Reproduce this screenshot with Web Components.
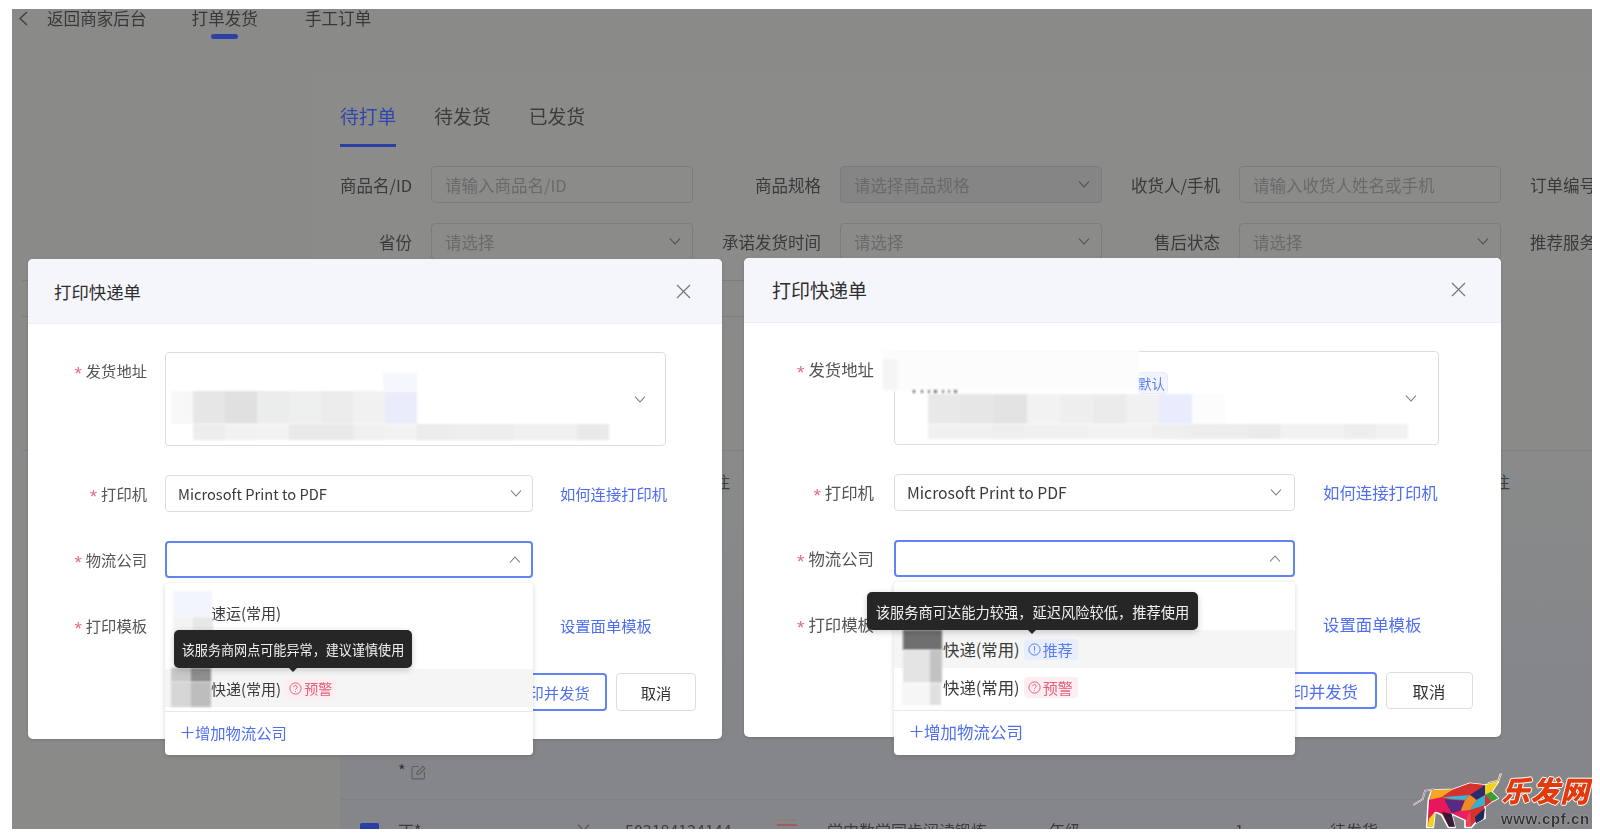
<!DOCTYPE html>
<html lang="zh">
<head>
<meta charset="utf-8">
<title>打印快递单</title>
<style>
html,body{margin:0;padding:0;background:#fff;width:1600px;height:838px;overflow:hidden;font-family:"Noto Sans CJK SC","Noto Sans",sans-serif}
</style>
</head>
<body>
<app-screen>
  <page-nav></page-nav>
  <order-filters></order-filters>
  <order-table></order-table>

  <print-dialog style="left:16px;top:250px;width:694px;--fs:15.3px;--title:17.4px;--label:119px;--gap:18px;--addr:501px;--sel:368px;--hdr:65px;--hl:26px;--hr:31px;--pad-r:26px;--btn:111px;--cancel:80px;--btn-h:38px;--link-gap:27px;--chev:11px;--addr-pr:19px">
    <mosaic-patch slot="address" style="left:5px;top:38px" w="32" cells="#f8f8f8:22 #e6e6e6 #e0e0e0 #ebecec #eeefef #ececec #f1f1f1 #e9ecfb" h="33"></mosaic-patch>
    <mosaic-patch slot="address" style="left:27px;top:71px" w="32" cells="#ededed #f1f1f1 #f2f2f2 #e9e9e9 #e9e9e9 #f0f0f0 #f2f2f2 #ececec #eeeeee #ededed #f0f0f0 #f0f0f0 #e9e9e9" h="16"></mosaic-patch>
    <mosaic-patch slot="address" style="left:217px;top:20px" w="34" cells="#f5f7fe" h="18"></mosaic-patch>
    <drop-list slot="drop" style="--itemfs:15px;--bfs:14px;--footfs:15.3px;--pl:46px;--foot:44px;--top:10px;--after:4px">
      <drop-item>速运(常用)</drop-item>
      <drop-item></drop-item>
      <drop-item hover>快递(常用)<status-badge kind="warn">预警</status-badge></drop-item>
      <mosaic-patch style="left:8px;top:8px" w="39" cells="#f3f5fd" h="26"></mosaic-patch>
      <mosaic-patch style="left:8px;top:34px" w="20" cells="#f2f3f2 #e6e8e6" h="16"></mosaic-patch>
      <mosaic-patch style="left:6px;top:85px" w="20" cells="#c8c8c8 #8e8e8e" h="14"></mosaic-patch>
      <mosaic-patch style="left:6px;top:99px" w="20" cells="#d5d5d5 #bdbdbd" h="25"></mosaic-patch>
      <dark-tip style="left:9px;top:47px;width:238px;--tfs:13.1px;--arrow:119px">该服务商网点可能异常，建议谨慎使用</dark-tip>
    </drop-list>
  </print-dialog>

  <print-dialog style="left:732px;top:248.5px;width:756.5px;--fs:16.4px;--title:19px;--label:130px;--gap:20px;--addr:545px;--sel:401px;--hdr:65.5px;--hl:28px;--hr:35px;--pad-r:28px;--btn:119px;--cancel:87px;--btn-h:37px;--link-gap:28px;--chev:13px;--addr-pr:21px">
    <mosaic-patch slot="address" style="left:33px;top:42px" w="33" cells="#e8e8e8 #e6e6e6 #e3e3e3 #f2f2f2 #eeeeee #ebebeb #f1f1f1 #e8ecfc #fcfcfc" h="30"></mosaic-patch>
    <mosaic-patch slot="address" style="left:33px;top:72px" w="32" cells="#f0f0f0 #f0f0f0 #eeeeee #f0f0f0 #f0f0f0 #f2f2f2 #f2f2f2 #efefef #ededed #ededed #ebebeb #f1f1f1 #f1f1f1 #ededed #f1f1f1" h="15"></mosaic-patch>
    <default-tag slot="address" style="left:243px;top:20px">默认</default-tag>
    <mosaic-patch slot="address" style="left:-12px;top:-2px" w="256" cells="#fcfcfc" h="41"></mosaic-patch>
    <mosaic-patch slot="address" style="left:-12px;top:7px" w="15" cells="#f5f5f5" h="30"></mosaic-patch>
    <mosaic-patch slot="address" style="left:18px;top:38px" w="3" cells="#555:2 #fff:6 #666:2 #fff:5 #777:2 #fff:4 #666:3 #fff:5 #777:2 #fff:4 #888:2 #fff:4 #777:3" h="3"></mosaic-patch>
    <drop-list slot="drop" style="--itemfs:16.4px;--bfs:15px;--footfs:16.5px;--pl:49px;--foot:45px;--top:10px;--after:4px">
      <drop-item></drop-item>
      <drop-item hover>快递(常用)<status-badge kind="rec">推荐</status-badge></drop-item>
      <drop-item>快递(常用)<status-badge kind="warn">预警</status-badge></drop-item>
      <mosaic-patch style="left:9px;top:48px" w="39" cells="#6f6f6f" h="20"></mosaic-patch>
      <mosaic-patch style="left:9px;top:68px" w="27" cells="#e4e4e4:27 #c2c2c2:12" h="33"></mosaic-patch>
      <mosaic-patch style="left:8px;top:101px" w="27" cells="#f6f6f6:28 #e0e0e0:11" h="22"></mosaic-patch>
      <dark-tip style="left:-27px;top:10px;width:331px;--tfs:14.25px;--arrow:165px">该服务商可达能力较强，延迟风险较低，推荐使用</dark-tip>
    </drop-list>
  </print-dialog>

  <watermark-logo></watermark-logo>
</app-screen>

<script>
const chevron = (up, size, col) => `<svg width="${size}" height="${Math.round(size*.6)}" viewBox="0 0 12 7" fill="none" stroke="${col || '#767676'}" stroke-width="1.1" style="display:block;flex:none"><path d="${up ? 'M1 6.5 6 1l5 5.5' : 'M1 .5 6 6l5-5.5'}"/></svg>`;

function define(name, html, setup) {
  customElements.define(name, class extends HTMLElement {
    constructor() {
      super();
      this.attachShadow({mode: 'open'});
    }
    connectedCallback() {
      this.shadowRoot.innerHTML = typeof html === 'function' ? html(this) : html;
      if (setup) setup(this);
    }
  });
}

define('app-screen', `<style>
:host{display:flex;flex-direction:column;position:relative;width:1580px;height:820px;margin:9px 0 0 12px;clip-path:inset(-9px 0 0 0);background:#8a8b89;color:#3e3e3e;filter:blur(.4px)}
</style><slot></slot>`);

define('page-nav', `<style>
:host{display:flex;align-items:flex-start;height:63px;flex:none;font-size:16.6px;line-height:18px;color:#383838}
svg{margin:2px 0 0 5px}
.l{display:block}
.back{margin-left:18px;margin-right:45px}
.on{margin-right:47px}
.on::after{content:"";display:block;width:27px;height:5px;border-radius:3px;background:#2c40a8;margin:7px auto 0}
</style>
<svg width="12" height="15" viewBox="0 0 12 15" fill="none" stroke="#3a3a3a" stroke-width="1.2"><path d="M10 1 3 7.5l7 6.5"/></svg>
<span class="l back">返回商家后台</span><span class="l on">打单发货</span><span class="l">手工订单</span>`);

define('order-filters', `<style>
:host{display:block;flex:none;height:207px;margin-left:300px;padding:33px 0 0 28px;box-sizing:border-box;background:#8b8c8a;overflow:hidden}
.tabs{display:flex;gap:38px;margin-bottom:19px}
.t{height:42px;box-sizing:border-box;font-size:18.8px;line-height:22px;color:#3c3c3c}
.t.on{color:#2f47ad;border-bottom:3px solid #2c40a8}
.g{display:grid;grid-template-columns:72px 262px 109px 262px 99px 262px 76px;column-gap:19px;row-gap:20px;font-size:16.5px;align-items:center;white-space:nowrap}
.lb{text-align:right;color:#3a3a3a}
.f{height:37px;box-sizing:border-box;border:1px solid #7b7c7b;border-radius:4px;padding:0 11px 0 13px;display:flex;align-items:center;justify-content:space-between;color:#6a6a6a}
.f.d{background:#848584}
</style>
<div class="tabs"><span class="t on">待打单</span><span class="t">待发货</span><span class="t">已发货</span></div>
<div class="g">
<span class="lb">商品名/ID</span><div class="f">请输入商品名/ID</div>
<span class="lb">商品规格</span><div class="f d">请选择商品规格${chevron(false,12,'#4c4c4c')}</div>
<span class="lb">收货人/手机</span><div class="f">请输入收货人姓名或手机</div>
<span class="lb">订单编号</span>
<span class="lb">省份</span><div class="f">请选择${chevron(false,12,'#4c4c4c')}</div>
<span class="lb">承诺发货时间</span><div class="f">请选择${chevron(false,12,'#4c4c4c')}</div>
<span class="lb">售后状态</span><div class="f">请选择${chevron(false,12,'#4c4c4c')}</div>
<span class="lb">推荐服务</span>
</div>`);

define('order-table', `<style>
:host{display:flex;flex-direction:column;flex:1;min-height:0;font-size:16px;color:#3c3c3c}
.r{margin-left:10px;flex:none;box-sizing:border-box}
.a{height:2px;width:722px;border-bottom:1px solid #7d7d7d}
.b{height:36px;width:722px;border-bottom:1px solid #7d7d7d}
.c{height:134px;border-bottom:1px solid #7f807f}
.lower{flex:1;min-height:0;margin-left:328px;background:linear-gradient(#898a89,#85868a 60%);display:flex;flex-direction:column}
.head{height:60px;flex:none;display:grid;grid-template-columns:374px 16px 764px 16px;align-items:center;font-size:16px;line-height:60px}
.head span{grid-column:2}
.head span+span{grid-column:4}
.memo{height:289px;flex:none;padding:0 0 0 58px;box-sizing:border-box;border-bottom:1px solid #7f8083;display:flex;align-items:flex-start;gap:6px}
.memo b{font-weight:400;line-height:22px;margin-top:248px;font-size:16px;color:#333}
.memo svg{margin-top:254px}
.row{display:grid;grid-template-columns:38px 179px 48px 152px 50px 206px 202px 95px 1fr;padding:19px 0 0 20px;white-space:nowrap;line-height:22px}
.cb{width:19px;height:20px;margin-top:4px;background:#2a3ea6;border-radius:2px}
.ch{display:block;padding-top:5px}
.th{width:20px;height:18px;background:linear-gradient(#8a7f80 0 2px,#85868a 2px 5px,#a05a60 5px 7px,#85868a 7px)}
</style>
<div class="r a"></div><div class="r b"></div><div class="r c"></div>
<div class="lower">
  <div class="head"><span>注</span><span>注</span></div>
  <div class="memo"><b>*</b><svg width="15" height="15" viewBox="0 0 15 15" fill="none" stroke="#5e5f60" stroke-width="1.1"><path d="M8 1.5H2.2A1.2 1.2 0 0 0 1 2.7v10a1.2 1.2 0 0 0 1.2 1.2h10a1.2 1.2 0 0 0 1.2-1.2V7"/><path d="M6 9.5V7.4L12 1.4l2 2-6 6z"/></svg></div>
  <div class="row"><div class="cb"></div><span>丁*</span><span class="ch">${chevron(false,13,'#555')}</span><span>503184124144</span><div class="th"></div><span>学中数学同步阅读锻炼</span><span>一年级</span><span>1</span><span>待发货</span></div>
</div>`);

define('print-dialog', `<style>
:host{position:absolute;display:block;background:#fff;border-radius:5px;font-size:var(--fs);color:#333;box-shadow:0 1px 3px rgba(0,0,0,.15)}
header{height:var(--hdr);box-sizing:border-box;background:#f5f6fb;border-bottom:1px solid #eeeef2;border-radius:5px 5px 0 0;display:flex;align-items:center;justify-content:space-between;padding:0 var(--hr) 0 var(--hl);font-size:var(--title);color:#2e2e2e}
.body{display:flex;flex-direction:column;gap:29px;padding:28px var(--pad-r) 28px 0}
.row{display:flex;align-items:flex-start;gap:var(--gap)}
.lb{width:var(--label);height:37px;flex:none;text-align:right;line-height:37px;color:#555;white-space:nowrap}
.lb i{font-family:"Liberation Sans",sans-serif;font-style:normal;font-size:19px;line-height:0;vertical-align:-3px;color:#ea6a7c;margin-right:4px}
.addr{position:relative;width:var(--addr);height:94px;box-sizing:border-box;border:1px solid #dcdde0;border-radius:4px;display:flex;align-items:center;justify-content:flex-end;padding-right:var(--addr-pr)}
.sel{position:relative;width:var(--sel);height:37px;box-sizing:border-box;border:1px solid #dcdde0;border-radius:4px;display:flex;align-items:center;justify-content:space-between;padding:0 calc(var(--chev) - 1px) 0 12px;flex:none;color:#3a3a3a}
.sel span{font-size:calc(var(--fs) * .96)}
.sel.open{border:2px solid #6283f3;justify-content:flex-end}
.blank{border-color:transparent}
a{color:#4f6ff0;margin-left:calc(var(--link-gap) - var(--gap));line-height:37px;text-decoration:none;white-space:nowrap}
.foot{display:flex;justify-content:flex-end;gap:9px}
.btn{height:var(--btn-h);box-sizing:border-box;border:1px solid #dcdde0;border-radius:4px;width:var(--cancel);display:flex;align-items:center;justify-content:center}
.btn.p{width:var(--btn);border:2px solid #6283f3;color:#4f6ff0}
.drop{position:absolute;left:-2px;right:-2px;top:calc(100% + 7px);z-index:3}
</style>
<header><span>打印快递单</span><svg width="15" height="15" viewBox="0 0 15 15" fill="none" stroke="#777" stroke-width="1.2"><path d="M1 1l13 13M14 1 1 14"/></svg></header>
<div class="body">
  <div class="row"><span class="lb"><i>*</i>发货地址</span><div class="addr"><slot name="address"></slot>${chevron(false,12)}</div></div>
  <div class="row"><span class="lb"><i>*</i>打印机</span><div class="sel"><span>Microsoft Print to PDF</span>${chevron(false,12)}</div><a>如何连接打印机</a></div>
  <div class="row"><span class="lb"><i>*</i>物流公司</span><div class="sel open">${chevron(true,12)}<div class="drop"><slot name="drop"></slot></div></div></div>
  <div class="row"><span class="lb"><i>*</i>打印模板</span><div class="sel blank"></div><a>设置面单模板</a></div>
  <div class="foot"><div class="btn p">打印并发货</div><div class="btn">取消</div></div>
</div>`);

define('drop-list', `<style>
:host{position:relative;display:block;background:#fff;border-radius:4px;box-shadow:0 1px 5px rgba(0,0,0,.16);padding-top:var(--top);font-size:var(--itemfs);color:#3a3a3a}
.foot{margin-top:var(--after);border-top:1.5px solid #e8e8ea;height:var(--foot);box-sizing:border-box;display:flex;align-items:center;padding:0 0 3px 16px;color:#4f6ff0;font-size:var(--footfs)}
svg{flex:none;margin-right:1px}
</style><slot></slot><div class="foot"><svg width="13" height="13" viewBox="0 0 13 13" stroke="#4f6ff0" stroke-width="1.2"><path d="M6.5 .5v12M.5 6.5h12"/></svg>增加物流公司</div>`);

define('drop-item', `<style>
:host{display:flex;align-items:center;height:38px;padding-left:var(--pl);gap:4px;white-space:nowrap}
:host([hover]){background:#f5f5f5}
</style><slot></slot>`);

define('status-badge', el => {
  const warn = el.getAttribute('kind') === 'warn';
  const c = warn ? '#e5607a' : '#5a7cf2';
  return `<style>
:host{display:inline-flex;align-items:center;gap:2px;height:21px;padding:0 5px 0 4px;border-radius:4px;font-size:var(--bfs);color:${c};background:${warn ? '#fdeff1' : '#e9eefd'}}
</style><svg width="13" height="13" viewBox="0 0 13 13" fill="none" stroke="${c}" stroke-width="1"><circle cx="6.5" cy="6.5" r="5.6"/>${warn ? '<path d="M4.8 5.2a1.7 1.7 0 1 1 2.6 1.4c-.6.4-.9.7-.9 1.3M6.5 9.2v.8"/>' : '<path d="M6.5 3.2v4.4M6.5 8.8v.9"/>'}</svg><slot></slot>`;
});

define('dark-tip', `<style>
:host{position:absolute;z-index:2;display:flex;align-items:center;justify-content:center;height:38px;background:#262626;color:#f2f2f2;border-radius:5px;font-size:var(--tfs);white-space:nowrap;box-shadow:0 2px 6px rgba(0,0,0,.2)}
i{position:absolute;top:100%;left:var(--arrow);margin-left:-4px;border:4px solid transparent;border-top-color:#262626;border-bottom:0}
</style><slot></slot><i></i>`);

define('default-tag', `<style>
:host{position:absolute;display:flex;align-items:center;justify-content:flex-end;width:30px;height:22px;box-sizing:border-box;background:#f3f5fe;border:1px solid #e6ebfd;border-radius:4px;font-size:13.5px;color:#5a7cf2;padding-right:2px;white-space:nowrap;overflow:hidden}
</style><slot></slot>`);

define('mosaic-patch', el => {
  const w = +el.getAttribute('w');
  const h = +el.getAttribute('h');
  const cells = el.getAttribute('cells').split(' ').map(s => {
    const [c, cw] = s.split(':');
    return `<b style="background:${c};width:${cw || w}px;height:${h}px"></b>`;
  }).join('');
  return `<style>
:host{position:absolute;display:flex;z-index:1;filter:blur(.8px)}
b{display:block;flex:none}
</style>${cells}`;
});

define('watermark-logo', `<style>
:host{position:absolute;left:1358px;top:731px;width:222px;height:89px;display:block;z-index:5}
svg{position:absolute;left:0;top:0}
.n{position:absolute;left:131px;top:32px;width:88px;display:flex;justify-content:space-between;font-size:29px;line-height:34px;font-weight:900;font-style:italic;color:#e23a0c;text-shadow:1px 0 0 #fff,-1px 0 0 #fff,0 1px 0 #fff,0 -1px 0 #fff;white-space:nowrap}
.u{position:absolute;left:131px;top:71px;font-family:"Liberation Sans",sans-serif;font-weight:700;font-size:15px;line-height:16px;color:#333335;letter-spacing:.6px;text-shadow:0 0 1px #fff;white-space:nowrap}
</style>
<svg width="230" height="98" viewBox="0 0 690 294">
  <path d="M185 150 250 148 300 130 345 135 385 125 365 155 385 175 365 185 345 200 345 235 315 250 305 262 285 262 285 240 245 222 255 262 235 262 215 225 195 215 190 262 170 262 175 180z" fill="#d4312f" stroke="#fff" stroke-width="5" stroke-linejoin="round"/>
  <path d="M130 195 158 178 165 152 192 148" fill="none" stroke="#fff" stroke-width="5"/>
  <path d="M130 195 158 178 165 152 192 148" fill="none" stroke="#7a4a8a" stroke-width="2"/>
  <path d="M355 130 385 122 393 100" fill="none" stroke="#fff" stroke-width="6"/>
  <path d="M355 130 385 122 393 100" fill="none" stroke="#c89a30" stroke-width="3"/>
  <polygon fill="#f5a623" points="185,150 250,148 215,172 180,180"/>
  <polygon fill="#e8175d" points="177,180 215,172 245,220 195,215 175,235"/>
  <polygon fill="#d4312f" points="250,148 300,130 345,135 300,165 215,172"/>
  <polygon fill="#38b6d8" points="215,172 300,165 285,180 245,178"/>
  <polygon fill="#5a2a82" points="222,178 285,182 272,213 245,220"/>
  <polygon fill="#e91e63" points="245,220 272,213 300,210 288,240"/>
  <polygon fill="#2c2c6c" points="300,165 345,135 345,165 320,180"/>
  <polygon fill="#f08a24" points="285,180 300,165 320,180 300,210 272,213"/>
  <polygon fill="#35b0d0" points="320,180 345,165 345,195 300,210"/>
  <polygon fill="#f0d020" points="345,135 385,125 365,155 345,165"/>
  <polygon fill="#3f9b3a" points="365,155 385,175 365,185 345,165"/>
  <polygon fill="#d62f2f" points="345,165 365,185 345,200"/>
  <polygon fill="#f2d21f" points="178,235 195,215 190,260 172,260"/>
  <polygon fill="#3a1a3a" points="215,215 245,222 255,260 237,260"/>
  <polygon fill="#e8455d" points="288,240 300,212 304,260 290,260"/>
  <polygon fill="#1c2c60" points="315,230 345,205 340,238 318,250"/>
</svg>
<div class="n"><span>乐</span><span>发</span><span>网</span></div>
<div class="u">www.cpf.cn</div>`);
</script>
</body>
</html>
